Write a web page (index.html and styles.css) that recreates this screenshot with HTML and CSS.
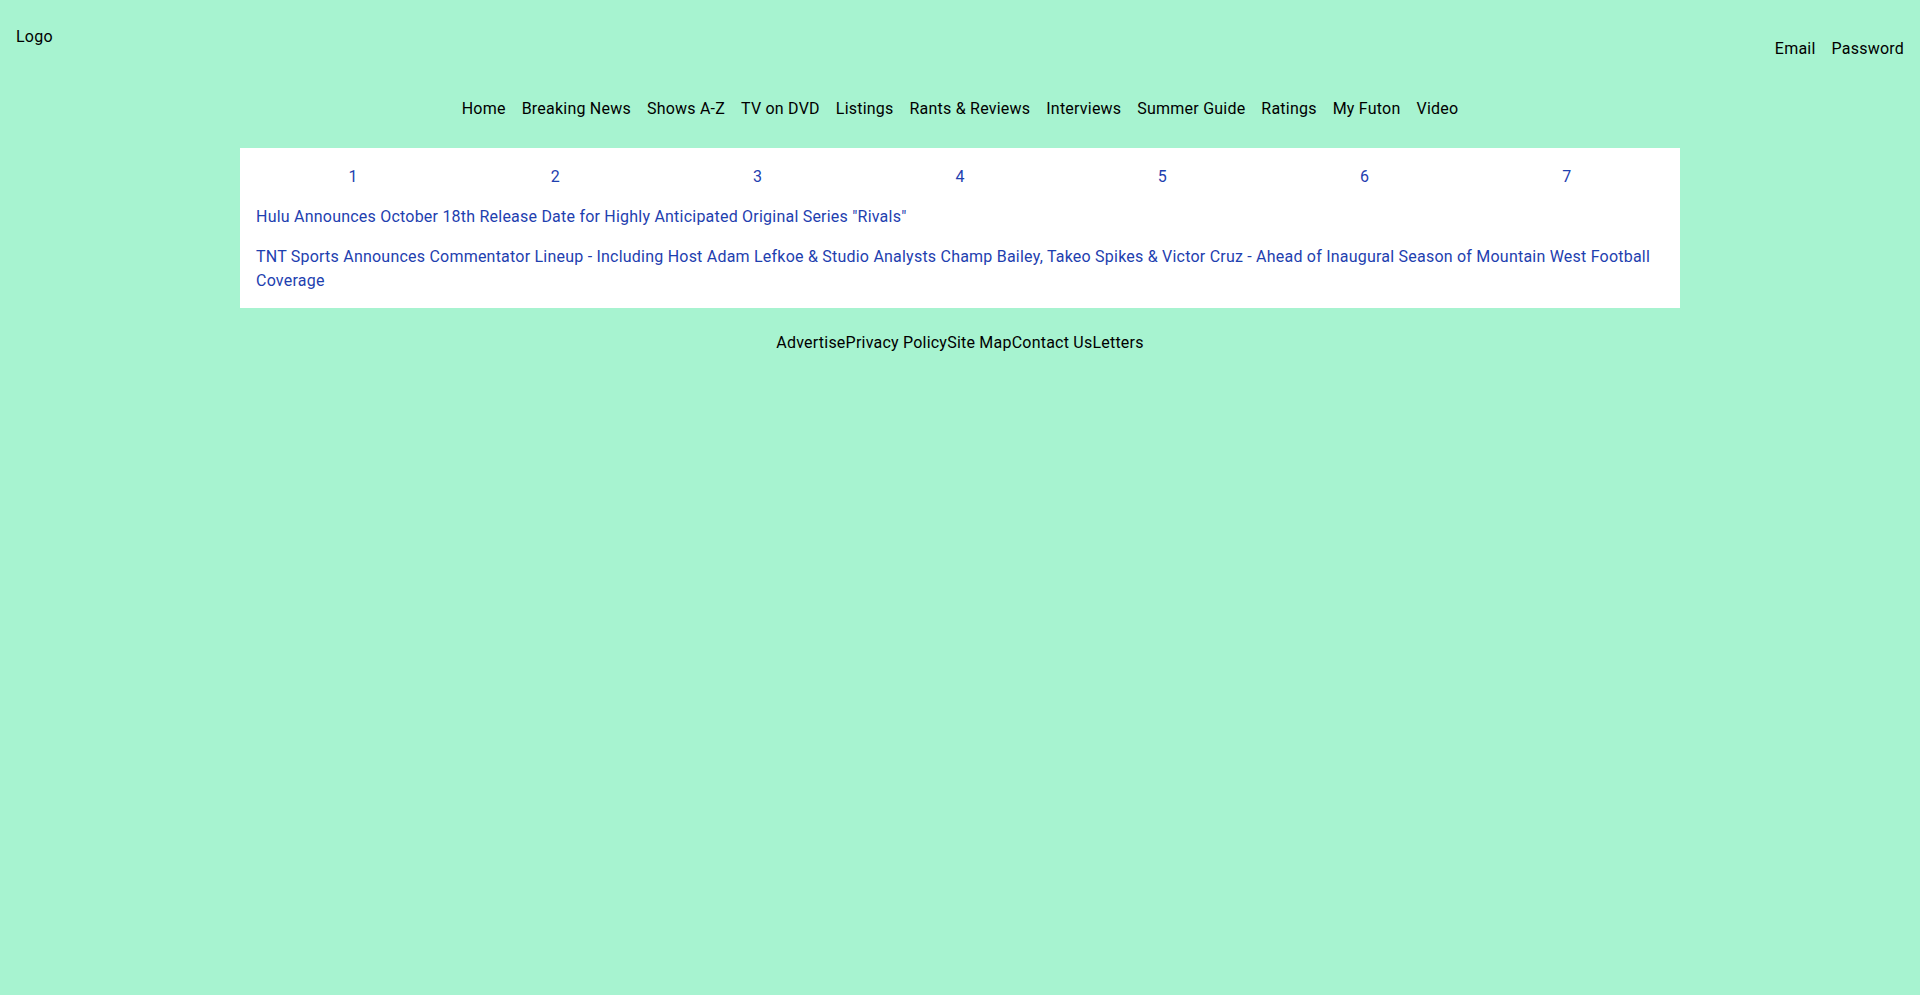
FILE: index.html
```html
<!DOCTYPE html>
<html lang="en">
<head>
<meta charset="utf-8">
<title>TV News</title>
<link rel="stylesheet" href="styles.css">
</head>
<body>
<header class="site-header">
  <div class="logo">Logo</div>
  <div class="login">
    <span class="login-item">Email</span>
    <span class="login-item">Password</span>
  </div>
</header>
<nav class="main-nav">
  <a href="#">Home</a>
  <a href="#">Breaking News</a>
  <a href="#">Shows A-Z</a>
  <a href="#">TV on DVD</a>
  <a href="#">Listings</a>
  <a href="#">Rants &amp; Reviews</a>
  <a href="#">Interviews</a>
  <a href="#">Summer Guide</a>
  <a href="#">Ratings</a>
  <a href="#">My Futon</a>
  <a href="#">Video</a>
</nav>
<main class="panel">
  <div class="pager">
    <a href="#">1</a>
    <a href="#">2</a>
    <a href="#">3</a>
    <a href="#">4</a>
    <a href="#">5</a>
    <a href="#">6</a>
    <a href="#">7</a>
  </div>
  <a class="story" href="#">Hulu Announces October 18th Release Date for Highly Anticipated Original Series "Rivals"</a>
  <a class="story" href="#">TNT Sports Announces Commentator Lineup - Including Host Adam Lefkoe &amp; Studio Analysts Champ Bailey, Takeo Spikes &amp; Victor Cruz - Ahead of Inaugural Season of Mountain West Football Coverage</a>
</main>
<footer class="site-footer">
  <a href="#">Advertise</a><a href="#">Privacy Policy</a><a href="#">Site Map</a><a href="#">Contact Us</a><a href="#">Letters</a>
</footer>
</body>
</html>
```

FILE: styles.css
```css
html, body {
  margin: 0;
  padding: 0;
}
body {
  background: #a7f3d0;
  color: #000;
  font-family: Roboto, "Noto Sans", sans-serif;
  font-size: 16px;
  line-height: 24px;
  letter-spacing: 0.22px;
  min-height: 995px;
}
a {
  color: inherit;
  text-decoration: none;
}
.site-header {
  display: flex;
  justify-content: space-between;
  align-items: flex-start;
  padding: 25px 16px 0;
}
.login {
  display: flex;
  gap: 16px;
  margin-top: 12px;
}
.main-nav {
  display: flex;
  justify-content: center;
  gap: 16px;
  padding-top: 36px;
}
.panel {
  display: flex;
  flex-direction: column;
  gap: 16px;
  background: #fff;
  width: 1440px;
  box-sizing: border-box;
  margin: 27px auto 0;
  padding: 17px 16px 15px;
}
.pager {
  display: grid;
  grid-template-columns: repeat(7, 1fr);
  column-gap: 8px;
  text-align: center;
}
.pager a,
.story {
  color: #1e40af;
}
.site-footer {
  display: flex;
  justify-content: center;
  padding-top: 23px;
}
```
